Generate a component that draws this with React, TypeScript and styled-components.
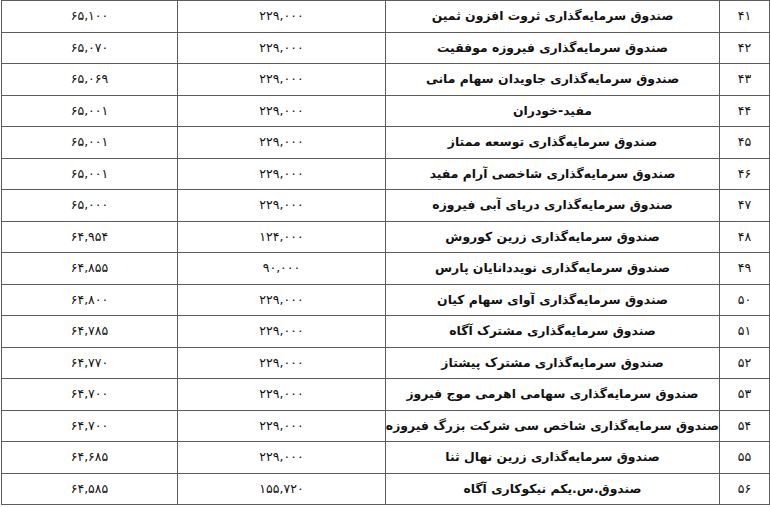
import styled, { createGlobalStyle } from 'styled-components';

const GlobalStyle = createGlobalStyle`
  html, body {
    margin: 0;
    padding: 0;
    background: #ffffff;
  }
`;

const Table = styled.table`
  direction: rtl;
  border-collapse: collapse;
  width: 768px;
  margin-left: 1px;
  table-layout: fixed;
  color: #111;
`;

const Col = styled.col<{ $w: number }>`
  width: ${(p) => p.$w}px;
`;

const Row = styled.tr`
  height: 31.5px;
`;

const Cell = styled.td`
  border: 1px solid #5c5c5c;
  text-align: center;
  vertical-align: middle;
  padding: 0;
  font-family: 'DejaVu Sans', sans-serif;
  font-size: 12.5px;
  font-weight: 400;
  white-space: nowrap;
  line-height: 1;
`;

const NameCell = styled(Cell)`
  font-size: 12.4px;
  font-weight: 700;
`;

const rows: [string, string, string, string][] = [
  ['۴۱', 'صندوق سرمایه‌گذاری ثروت افزون ثمین', '۲۲۹,۰۰۰', '۶۵,۱۰۰'],
  ['۴۲', 'صندوق سرمایه‌گذاری فیروزه موفقیت', '۲۲۹,۰۰۰', '۶۵,۰۷۰'],
  ['۴۳', 'صندوق سرمایه‌گذاری جاویدان سهام مانی', '۲۲۹,۰۰۰', '۶۵,۰۶۹'],
  ['۴۴', 'مفید-خودران', '۲۲۹,۰۰۰', '۶۵,۰۰۱'],
  ['۴۵', 'صندوق سرمایه‌گذاری توسعه ممتاز', '۲۲۹,۰۰۰', '۶۵,۰۰۱'],
  ['۴۶', 'صندوق سرمایه‌گذاری شاخصی آرام مفید', '۲۲۹,۰۰۰', '۶۵,۰۰۱'],
  ['۴۷', 'صندوق سرمایه‌گذاری دریای آبی فیروزه', '۲۲۹,۰۰۰', '۶۵,۰۰۰'],
  ['۴۸', 'صندوق سرمایه‌گذاری زرین کوروش', '۱۲۴,۰۰۰', '۶۴,۹۵۴'],
  ['۴۹', 'صندوق سرمایه‌گذاری نویددانایان پارس', '۹۰,۰۰۰', '۶۴,۸۵۵'],
  ['۵۰', 'صندوق سرمایه‌گذاری آوای سهام کیان', '۲۲۹,۰۰۰', '۶۴,۸۰۰'],
  ['۵۱', 'صندوق سرمایه‌گذاری مشترک آگاه', '۲۲۹,۰۰۰', '۶۴,۷۸۵'],
  ['۵۲', 'صندوق سرمایه‌گذاری مشترک پیشتاز', '۲۲۹,۰۰۰', '۶۴,۷۷۰'],
  ['۵۳', 'صندوق سرمایه‌گذاری سهامی اهرمی موج فیروز', '۲۲۹,۰۰۰', '۶۴,۷۰۰'],
  ['۵۴', 'صندوق سرمایه‌گذاری شاخص سی شرکت بزرگ فیروزه', '۲۲۹,۰۰۰', '۶۴,۷۰۰'],
  ['۵۵', 'صندوق سرمایه‌گذاری زرین نهال ثنا', '۲۲۹,۰۰۰', '۶۴,۶۸۵'],
  ['۵۶', 'صندوق.س.یکم نیکوکاری آگاه', '۱۵۵,۷۲۰', '۶۴,۵۸۵'],
];

export default function App() {
  return (
    <>
      <GlobalStyle />
      <Table>
        <colgroup>
          <Col $w={50} />
          <Col $w={334} />
          <Col $w={208} />
          <Col $w={176} />
        </colgroup>
        <tbody>
          {rows.map(([num, name, units, price]) => (
            <Row key={num}>
              <Cell>{num}</Cell>
              <NameCell>{name}</NameCell>
              <Cell>{units}</Cell>
              <Cell>{price}</Cell>
            </Row>
          ))}
        </tbody>
      </Table>
    </>
  );
}
